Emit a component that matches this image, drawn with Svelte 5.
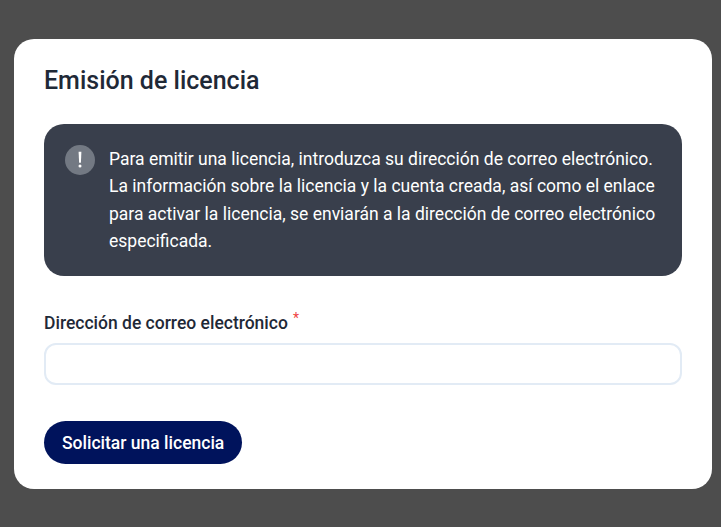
<script>
  let email = $state('');
</script>

<div class="page">
  <section class="card">
    <h1>Emisión de licencia</h1>
    <div class="alert">
      <svg class="icon" width="30" height="30" viewBox="0 0 30 30" aria-hidden="true">
        <circle cx="15" cy="15" r="15" fill="#737983" />
        <path d="M13.6 6.8h2.8l-.5 10.9h-1.8z" fill="#fff" />
        <circle cx="15" cy="21" r="1.5" fill="#fff" />
      </svg>
      <p>Para emitir una licencia, introduzca su dirección de correo electrónico. La información sobre la licencia y la cuenta creada, así como el enlace para activar la licencia, se enviarán a la dirección de correo electrónico especificada.</p>
    </div>
    <label for="email">Dirección de correo electrónico<span class="req">*</span></label>
    <input id="email" type="email" bind:value={email} />
    <button type="button">Solicitar una licencia</button>
  </section>
</div>

<style>
  :global(body) {
    margin: 0;
    background: #4d4d4d;
  }
  .page {
    padding: 39px 9px 38px 14px;
    font-family: Roboto, sans-serif;
  }
  .card {
    background: #fff;
    border-radius: 20px;
    padding: 27px 30px 25px;
    height: 450px;
    box-sizing: border-box;
    display: flex;
    flex-direction: column;
    align-items: flex-start;
  }
  h1 {
    margin: 0;
    font-size: 25px;
    line-height: 30px;
    font-weight: 500;
    color: #1f2937;
  }
  .alert {
    margin-top: 28px;
    align-self: stretch;
    box-sizing: border-box;
    height: 152px;
    background: #393f4c;
    border-radius: 20px;
    padding: 21px 21px;
    display: flex;
    gap: 14px;
    color: #fff;
  }
  .icon {
    flex: none;
  }
  p {
    margin: 1px 0 0;
    font-size: 17.5px;
    line-height: 27.4px;
  }
  label {
    margin-top: 35px;
    font-size: 17.5px;
    line-height: 24px;
    font-weight: 500;
    color: #1f2937;
    display: block;
  }
  .req {
    color: #ef4444;
    font-size: 14px;
    margin-left: 5px;
    vertical-align: 6px;
    line-height: 1;
    font-weight: 400;
  }
  input {
    margin-top: 8px;
    align-self: stretch;
    box-sizing: border-box;
    height: 42px;
    border: 2px solid #e2ebf5;
    border-radius: 12px;
    background: #fff;
    outline: none;
    padding: 0 14px;
    font: inherit;
  }
  button {
    margin-top: 36px;
    height: 43px;
    padding: 0 18px;
    border: 0;
    border-radius: 22px;
    background: #00135c;
    color: #fff;
    font-family: inherit;
    font-size: 17.5px;
    font-weight: 500;
  }
</style>
